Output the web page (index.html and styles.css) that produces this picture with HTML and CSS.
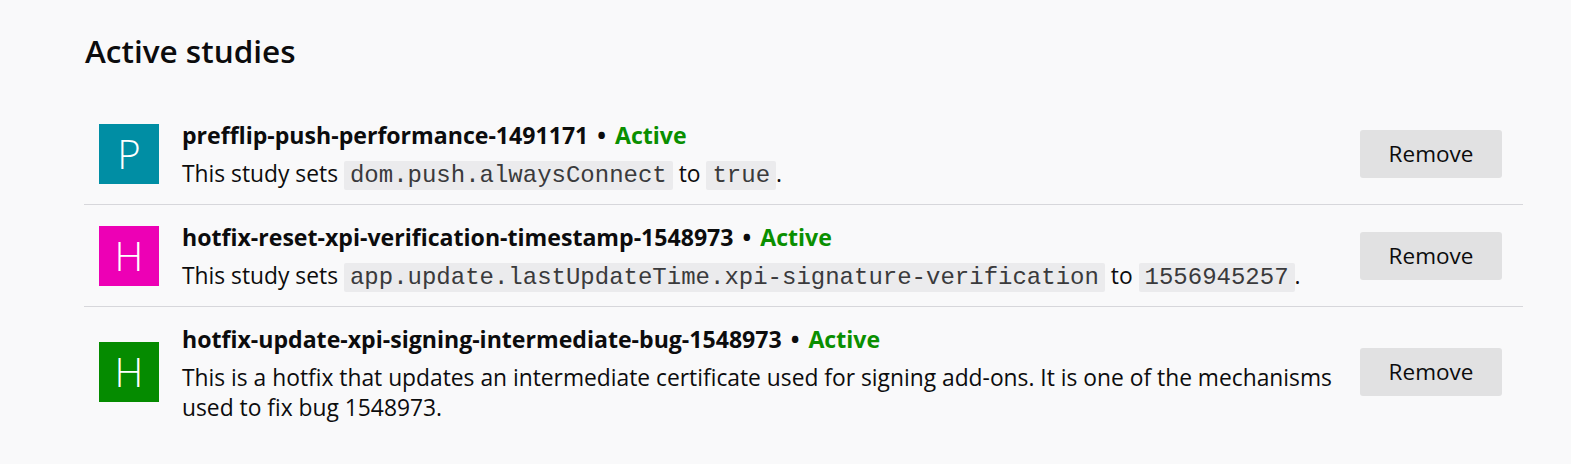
FILE: index.html
```html
<!DOCTYPE html>
<html lang="en">
<head>
<meta charset="utf-8">
<title>about:studies</title>
<link rel="stylesheet" href="styles.css">
</head>
<body>
<main class="page">
  <h2 class="heading">Active studies</h2>
  <ul class="study-list">
    <li class="study">
      <div class="study-icon icon-teal">P</div>
      <div class="study-details">
        <div class="study-header"><span class="study-name">prefflip-push-performance-1491171</span> <span class="study-sep">•</span> <span class="study-status">Active</span></div>
        <div class="study-description">This study sets <code class="pref">dom.push.alwaysConnect</code> to <code class="pref">true</code>.</div>
      </div>
      <div class="study-actions"><button class="remove-button" type="button">Remove</button></div>
    </li>
    <li class="study">
      <div class="study-icon icon-magenta">H</div>
      <div class="study-details">
        <div class="study-header"><span class="study-name">hotfix-reset-xpi-verification-timestamp-1548973</span> <span class="study-sep">•</span> <span class="study-status">Active</span></div>
        <div class="study-description">This study sets <code class="pref">app.update.lastUpdateTime.xpi-signature-verification</code> to <code class="pref">1556945257</code>.</div>
      </div>
      <div class="study-actions"><button class="remove-button" type="button">Remove</button></div>
    </li>
    <li class="study">
      <div class="study-icon icon-green">H</div>
      <div class="study-details">
        <div class="study-header"><span class="study-name">hotfix-update-xpi-signing-intermediate-bug-1548973</span> <span class="study-sep">•</span> <span class="study-status">Active</span></div>
        <div class="study-description">This is a hotfix that updates an intermediate certificate used for signing add-ons. It is one of the mechanisms used to fix bug 1548973.</div>
      </div>
      <div class="study-actions"><button class="remove-button" type="button">Remove</button></div>
    </li>
  </ul>
</main>
</body>
</html>
```

FILE: styles.css
```css
html, body {
  margin: 0;
  padding: 0;
  background: #f9f9fa;
  color: #0c0c0d;
  font-family: "Open Sans", "Noto Sans", sans-serif;
  font-size: 22.8px;
}

.page {
  padding: 0 48px 0 84px;
}

.heading {
  margin: 0;
  padding: 27px 0 0 1px;
  font-size: 31.5px;
  font-weight: 600;
  line-height: 48px;
  height: 76px;
}

.study-list {
  list-style: none;
  margin: 0;
  padding: 0;
}

.study {
  display: flex;
  flex-direction: row;
  align-items: center;
  padding: 13.5px 21px 13.5px 15px;
  border-bottom: 1px solid #d7d7db;
}

.study:last-child {
  border-bottom: none;
}

.study-icon {
  flex: 0 0 60px;
  width: 60px;
  height: 60px;
  margin-right: 23px;
  color: #ffffff;
  font-size: 40px;
  font-weight: 300;
  line-height: 60px;
  text-align: center;
}

.icon-teal { background: #008ea4; }
.icon-magenta { background: #ed00b5; }
.icon-green { background: #058b00; }

.study-details {
  flex: 1 1 auto;
  min-width: 0;
  padding-top: 3px;
}

.study-header {
  font-size: 23.1px;
  line-height: 30px;
  margin-bottom: 9px;
  font-weight: 700;
}

.study-sep {
  font-weight: 700;
  margin: 0 3px;
}

.study-status {
  color: #0a8f00;
}

.study-description {
  line-height: 30px;
}

.pref {
  font-family: "Liberation Mono", "Courier New", monospace;
  font-size: 24px;
  color: #3a3a3c;
  background: #ebebed;
  padding: 1px 6px;
  border-radius: 2px;
}

.study-actions {
  flex: 0 0 auto;
  margin-left: 15px;
}

.remove-button {
  display: block;
  width: 142px;
  height: 48px;
  padding: 0;
  border: none;
  border-radius: 3px;
  background: #e1e1e2;
  color: #0c0c0d;
  font-family: "Open Sans", "Noto Sans", sans-serif;
  font-size: 22.5px;
}
```
